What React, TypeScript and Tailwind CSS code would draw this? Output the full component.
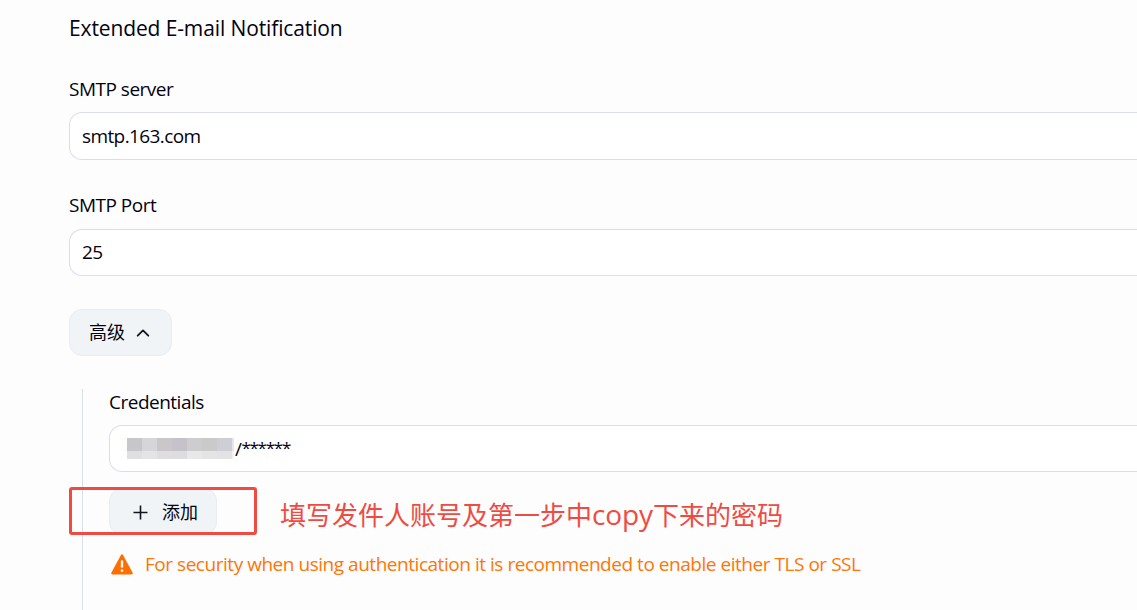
import type { ReactNode } from "react";

interface FieldProps {
  label: string;
  className?: string;
  inputClassName?: string;
  children: ReactNode;
}

const Field = ({ label, className = "", inputClassName = "", children }: FieldProps) => (
  <div className={className}>
    <div className="h-6 text-[19px] leading-6 tracking-[-0.5px]">{label}</div>
    <div
      className={`flex items-center rounded-l-[13px] border border-r-0 border-[#d9dfea] bg-white text-[19px] tracking-[-0.6px] ${inputClassName}`}
    >
      {children}
    </div>
  </div>
);

const maskedTop = [
  "bg-[#c7c6c9]",
  "bg-[#d6d6d9]",
  "bg-[#cac7cb]",
  "bg-[#c5c3c9]",
  "bg-[#cdcccf]",
  "bg-[#cacaca]",
  "bg-[#cfcdd5]",
];

const maskedBottom = [
  "bg-[#dfdfdf]",
  "bg-[#e4e4e6]",
  "bg-[#dedde0]",
  "bg-[#dddde0]",
  "bg-[#e8e8ea]",
  "bg-[#e4e4e5]",
  "bg-[#e3e3e5]",
];

const MaskedUser = () => (
  <div className="flex flex-col">
    <div className="flex h-[13px]">
      <div className="w-[6px] bg-[#fdfdfb]" />
      {maskedTop.map((color, i) => (
        <div key={i} className={`w-[15px] ${color}`} />
      ))}
      <div className="w-[2px] bg-[#e6e5e9]" />
    </div>
    <div className="flex h-2 pl-[6px]">
      {maskedBottom.map((color, i) => (
        <div key={i} className={`w-[15px] ${color}`} />
      ))}
      <div className="w-[2px] bg-[#f3f3f4]" />
    </div>
  </div>
);

const WarningIcon = () => (
  <svg width="22" height="21" viewBox="0 0 22 21">
    <path
      d="M11 1.6 20.6 19.2H1.4Z"
      fill="#fe6f02"
      stroke="#fe6f02"
      strokeWidth="2.4"
      strokeLinejoin="round"
    />
    <path d="M11 6.5v7M11 15.5v2.3" stroke="#fff" strokeWidth="2.3" />
  </svg>
);

export default function App() {
  return (
    <div className="h-[610px] w-full overflow-hidden bg-[#fdfdfd] pl-[69px] pt-[14px] font-['Open_Sans','Noto_Sans_CJK_SC',sans-serif] text-[#020210]">
      <h1 className="h-7 text-[21px] leading-7 tracking-[-0.12px]">Extended E-mail Notification</h1>

      <Field label="SMTP server" className="mt-[35px]" inputClassName="mt-[11px] h-12 pl-3">
        smtp.163.com
      </Field>
      <Field label="SMTP Port" className="mt-[33px]" inputClassName="mt-3 h-[47px] pl-3">
        25
      </Field>

      <button className="mt-[33px] flex h-[47px] w-[103px] items-center rounded-[13px] border border-[#e9edf1] bg-[#f1f4f7] pl-[19px] text-[18px]">
        高级
        <svg className="ml-[11px]" width="14" height="10" viewBox="0 0 14 10" fill="none">
          <path
            d="M1.7 7.7 7 2.4l5.3 5.3"
            stroke="#14141f"
            strokeWidth="1.8"
            strokeLinecap="round"
            strokeLinejoin="round"
          />
        </svg>
      </button>

      <div className="ml-[13px] mt-[33px] h-[221px] border-l border-[#d9dfea]">
        <Field label="Credentials" className="ml-[26px] pt-px" inputClassName="mt-[11px] h-[47px] pl-[11px]">
          <MaskedUser />
          <span className="ml-px mt-0.5 flex items-center">
            /<span className="mb-[3px] text-[17px] tracking-[-1.25px]">******</span>
          </span>
        </Field>

        <div className="-ml-[14px] mt-[15px] flex h-12 items-center">
          <div className="relative h-12 w-[188px] pl-10">
            <button className="mt-px flex h-[47px] w-[108px] items-center rounded-[13px] border border-[#e9edf1] bg-[#f1f4f7] pl-[23px] text-[18px]">
              <svg className="mt-px" width="15" height="15" viewBox="0 0 15 15">
                <path d="M7.5.5v14M.5 7.5h14" stroke="#14141f" strokeWidth="1.6" />
              </svg>
              <span className="ml-[14px] mt-0.5">添加</span>
            </button>
            <div className="absolute inset-0 rounded-[3px] border-[3px] border-[#f04b42]" />
          </div>
          <span className="ml-[23px] mt-[7px] whitespace-nowrap text-[26px] leading-8 text-[#f04b42]">
            填写发件人账号及第一步中<span className="text-[28px] tracking-[-0.1px]">copy</span>下来的密码
          </span>
        </div>

        <div className="ml-7 mt-[17px] flex h-6 items-center text-[19px] tracking-[-0.465px] text-[#fe7606]">
          <WarningIcon />
          <span className="ml-3 whitespace-nowrap">
            For security when using authentication it is recommended to enable either TLS or SSL
          </span>
        </div>
      </div>
    </div>
  );
}
